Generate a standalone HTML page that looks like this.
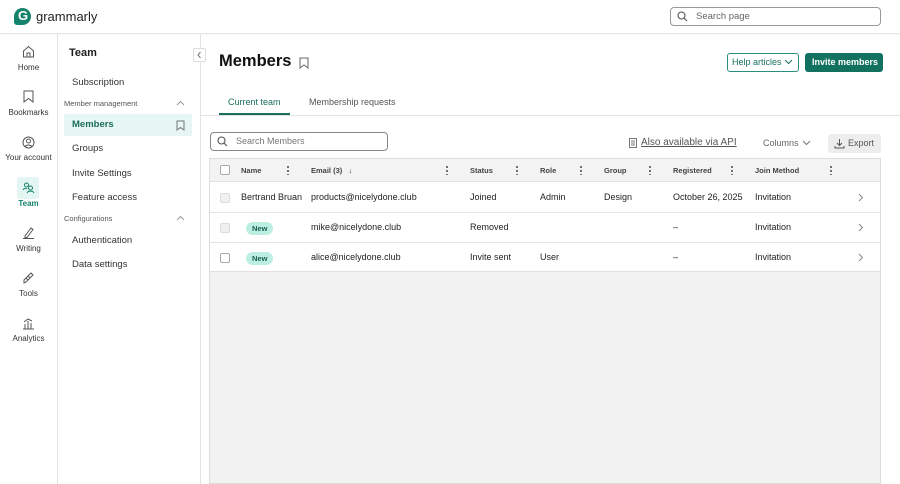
<!DOCTYPE html>
<html><head><meta charset="utf-8"><style>
*{box-sizing:border-box;margin:0;padding:0}
body{width:900px;height:484px;overflow:hidden;background:#fff;font-family:"Liberation Sans",sans-serif;color:#1f1f1f;position:relative}
.a{position:absolute}
.t{position:absolute;white-space:nowrap}
.rail .t{font-size:8px;color:#333;text-align:center;width:57px;left:0}
.nav{font-size:9.5px;color:#333}
.hd{font-size:7.5px;font-weight:bold;color:#444}
.cell{font-size:9px;color:#222}
.dots{position:absolute;width:2px;height:10px;background:radial-gradient(circle,#666 1px,transparent 1.2px) 0 0/2px 4px repeat-y}
.cb{position:absolute;width:10px;height:10px;border:1px solid #aaa;border-radius:2px;background:#fff}
.new{position:absolute;font-size:7.5px;font-weight:bold;color:#1a5e50;background:#bdeee2;border-radius:7px;padding:2px 6px}
</style></head><body>
<div class="a" style="left:0;top:0;width:900px;height:34px;border-bottom:1px solid #e6e6e6;box-shadow:0 1px 2px rgba(0,0,0,.04)"></div>
<div class="a" style="left:14px;top:8px;width:17px;height:17px;border-radius:50% 50% 50% 3px;background:#15826c"></div>
<div class="t" style="left:18px;top:8px;color:#fff;font-weight:bold;font-size:13px">G</div>
<div class="t" style="left:36px;top:9px;font-size:13px;color:#222">grammarly</div>
<div class="a" style="left:670px;top:7px;width:211px;height:19px;border:1px solid #999;border-radius:4px"></div>
<svg class="a" style="left:677px;top:11px" width="11" height="11" viewBox="0 0 11 11"><circle cx="4.5" cy="4.5" r="3.5" fill="none" stroke="#555" stroke-width="1.1"/><path d="M7 7l3 3" stroke="#555" stroke-width="1.1"/></svg>
<div class="t" style="left:696px;top:11px;font-size:9.5px;color:#666">Search page</div>
<div class="a" style="left:57px;top:34px;width:1px;height:450px;background:#e3e3e3"></div>
<div class="rail">
<svg class="a" style="left:22px;top:45px" width="13" height="13" viewBox="0 0 13 13"><path d="M1.5 6L6.5 1.5 11.5 6V12H1.5Z M5 12V8h3v4" fill="none" stroke="#555"/></svg>
<div class="t" style="top:63px">Home</div>
<svg class="a" style="left:23px;top:90px" width="11" height="13" viewBox="0 0 11 13"><path d="M1 1h9v11L5.5 8.5 1 12Z" fill="none" stroke="#555"/></svg>
<div class="t" style="top:108px">Bookmarks</div>
<svg class="a" style="left:22px;top:136px" width="13" height="13" viewBox="0 0 13 13"><circle cx="6.5" cy="6.5" r="5.5" fill="none" stroke="#555"/><circle cx="6.5" cy="5" r="2" fill="none" stroke="#555"/><path d="M3 10.5c2-2 5-2 7 0" fill="none" stroke="#555"/></svg>
<div class="t" style="top:153px">Your account</div>
<div class="a" style="left:17px;top:177px;width:22px;height:22px;background:#e4f6f2;border-radius:3px"></div>
<svg class="a" style="left:22px;top:181px" width="13" height="13" viewBox="0 0 13 13"><circle cx="4.5" cy="4" r="2" fill="none" stroke="#15826c"/><circle cx="8.5" cy="7" r="2" fill="none" stroke="#15826c"/><path d="M1 9c1-2 3-2 4-1M5 12c1-2.5 6-2.5 7 0" fill="none" stroke="#15826c"/></svg>
<div class="t" style="top:199px;color:#15826c;font-weight:bold">Team</div>
<svg class="a" style="left:22px;top:226px" width="13" height="13" viewBox="0 0 13 13"><path d="M3 10L9 2l2 1.5L5 11.5 3 11.5Z M1 12.5h11" fill="none" stroke="#555"/></svg>
<div class="t" style="top:244px">Writing</div>
<svg class="a" style="left:22px;top:271px" width="13" height="13" viewBox="0 0 13 13"><path d="M2 9l7-7 2 2-7 7-2 1Z M4 7l2 2M6 5l2 2" fill="none" stroke="#555"/></svg>
<div class="t" style="top:289px">Tools</div>
<svg class="a" style="left:22px;top:317px" width="13" height="13" viewBox="0 0 13 13"><path d="M1 12h11M3 12V7M6 12V4M9 12V6M2 5l4-3 4 2" fill="none" stroke="#555"/></svg>
<div class="t" style="top:334px">Analytics</div>
</div>
<div class="a" style="left:200px;top:34px;width:1px;height:450px;background:#e3e3e3"></div>
<div class="a" style="left:193px;top:48px;width:13px;height:14px;border:1px solid #ddd;border-radius:2px;background:#fff"></div>
<svg class="a" style="left:196px;top:51px" width="7" height="8" viewBox="0 0 7 8"><path d="M4.5 1L2 4l2.5 3" fill="none" stroke="#777"/></svg>
<div class="t" style="left:69px;top:47px;font-size:11px;font-weight:bold">Team</div>
<div class="t nav" style="left:72px;top:77px">Subscription</div>
<div class="t" style="left:64px;top:99px;font-size:7.5px;color:#555">Member management</div>
<svg class="a" style="left:176px;top:100px" width="9" height="6" viewBox="0 0 9 6"><path d="M1 5l3.5-3.5L8 5" fill="none" stroke="#999"/></svg>
<div class="a" style="left:64px;top:114px;width:128px;height:22px;background:#e6f6f3"></div>
<div class="t" style="left:72px;top:119px;font-size:9.5px;font-weight:bold;color:#1a6e5c">Members</div>
<svg class="a" style="left:176px;top:120px" width="9" height="11" viewBox="0 0 9 11"><path d="M1 1h7v9L4.5 7.5 1 10Z" fill="none" stroke="#777"/></svg>
<div class="t nav" style="left:72px;top:143px">Groups</div>
<div class="t nav" style="left:72px;top:168px">Invite Settings</div>
<div class="t nav" style="left:72px;top:192px">Feature access</div>
<div class="t" style="left:64px;top:214px;font-size:7.5px;color:#555">Configurations</div>
<svg class="a" style="left:176px;top:215px" width="9" height="6" viewBox="0 0 9 6"><path d="M1 5l3.5-3.5L8 5" fill="none" stroke="#999"/></svg>
<div class="t nav" style="left:72px;top:235px">Authentication</div>
<div class="t nav" style="left:72px;top:259px">Data settings</div>
<div class="t" style="left:219px;top:52px;font-size:16.5px;font-weight:bold;color:#111">Members</div>
<svg class="a" style="left:299px;top:57px" width="10" height="12" viewBox="0 0 10 12"><path d="M1 1h8v10L5 8 1 11Z" fill="none" stroke="#666"/></svg>
<div class="a" style="left:727px;top:53px;width:72px;height:19px;border:1px solid #2a8f7a;border-radius:3px"></div>
<div class="t" style="left:732px;top:57px;font-size:9px;color:#1a6e5c">Help articles</div>
<svg class="a" style="left:784px;top:59px" width="9" height="6" viewBox="0 0 9 6"><path d="M1 1l3.5 3.5L8 1" fill="none" stroke="#1a6e5c"/></svg>
<div class="a" style="left:805px;top:53px;width:78px;height:19px;background:#13725f;border-radius:3px"></div>
<div class="t" style="left:812px;top:57px;font-size:9px;font-weight:bold;color:#fff">Invite members</div>
<div class="t" style="left:228px;top:97px;font-size:9px;color:#1a6e5c">Current team</div>
<div class="a" style="left:219px;top:113px;width:71px;height:2px;background:#1a6e5c"></div>
<div class="t" style="left:309px;top:97px;font-size:9px;color:#555">Membership requests</div>
<div class="a" style="left:200px;top:115px;width:700px;height:1px;background:#e3e3e3"></div>
<div class="a" style="left:210px;top:132px;width:178px;height:19px;border:1px solid #888;border-radius:4px"></div>
<svg class="a" style="left:217px;top:136px" width="11" height="11" viewBox="0 0 11 11"><circle cx="4.5" cy="4.5" r="3.5" fill="none" stroke="#555" stroke-width="1.1"/><path d="M7 7l3 3" stroke="#555" stroke-width="1.1"/></svg>
<div class="t" style="left:236px;top:136px;font-size:9px;color:#777">Search Members</div>
<svg class="a" style="left:629px;top:138px" width="8" height="10" viewBox="0 0 8 10"><rect x="0.5" y="0.5" width="7" height="9" fill="none" stroke="#777"/><path d="M2 3h4M2 5h4M2 7h4" stroke="#777"/></svg>
<div class="t" style="left:641px;top:137px;font-size:10px;color:#555;text-decoration:underline">Also available via API</div>
<div class="t" style="left:763px;top:138px;font-size:9px;color:#666">Columns</div>
<svg class="a" style="left:802px;top:140px" width="9" height="6" viewBox="0 0 9 6"><path d="M1 1l3.5 3.5L8 1" fill="none" stroke="#777"/></svg>
<div class="a" style="left:828px;top:134px;width:53px;height:19px;background:#ededed;border-radius:3px"></div>
<svg class="a" style="left:834px;top:138px" width="11" height="11" viewBox="0 0 11 11"><path d="M5.5 1v6M3 5l2.5 2.5L8 5M1 8v2h9V8" fill="none" stroke="#555"/></svg>
<div class="t" style="left:848px;top:138px;font-size:9px;color:#555">Export</div>
<div class="a" style="left:209px;top:158px;width:672px;height:326px;border:1px solid #ddd;background:#f2f2f2"></div>
<div class="a" style="left:210px;top:159px;width:670px;height:23px;background:#f3f3f3;border-bottom:1px solid #e2e2e2"></div>
<div class="a" style="left:210px;top:182px;width:670px;height:90px;background:#fff"></div>
<div class="a" style="left:210px;top:212px;width:670px;height:1px;background:#e5e5e5"></div>
<div class="a" style="left:210px;top:242px;width:670px;height:1px;background:#e5e5e5"></div>
<div class="a" style="left:210px;top:271px;width:670px;height:1px;background:#e0e0e0"></div>
<div class="cb" style="left:220px;top:165px"></div>
<div class="t hd" style="left:241px;top:166px">Name</div><div class="dots" style="left:287px;top:165px"></div>
<div class="t hd" style="left:311px;top:166px">Email (3) &nbsp;&nbsp;↓</div><div class="dots" style="left:446px;top:165px"></div>
<div class="t hd" style="left:470px;top:166px">Status</div><div class="dots" style="left:516px;top:165px"></div>
<div class="t hd" style="left:540px;top:166px">Role</div><div class="dots" style="left:580px;top:165px"></div>
<div class="t hd" style="left:604px;top:166px">Group</div><div class="dots" style="left:649px;top:165px"></div>
<div class="t hd" style="left:673px;top:166px">Registered</div><div class="dots" style="left:731px;top:165px"></div>
<div class="t hd" style="left:755px;top:166px">Join Method</div><div class="dots" style="left:830px;top:165px"></div>
<div class="cb" style="left:220px;top:193px;border-color:#ddd;background:#f0f0f0"></div>
<div class="t cell" style="left:241px;top:192px">Bertrand Bruan</div>
<div class="t cell" style="left:311px;top:192px">products@nicelydone.club</div>
<div class="t cell" style="left:470px;top:192px">Joined</div>
<div class="t cell" style="left:540px;top:192px">Admin</div>
<div class="t cell" style="left:604px;top:192px">Design</div>
<div class="t cell" style="left:673px;top:192px">October 26, 2025</div>
<div class="t cell" style="left:755px;top:192px">Invitation</div>
<div class="cb" style="left:220px;top:223px;border-color:#ddd;background:#f0f0f0"></div>
<div class="new" style="left:246px;top:222px">New</div>
<div class="t cell" style="left:311px;top:222px">mike@nicelydone.club</div>
<div class="t cell" style="left:470px;top:222px">Removed</div>
<div class="t cell" style="left:673px;top:222px">–</div>
<div class="t cell" style="left:755px;top:222px">Invitation</div>
<div class="cb" style="left:220px;top:253px"></div>
<div class="new" style="left:246px;top:252px">New</div>
<div class="t cell" style="left:311px;top:252px">alice@nicelydone.club</div>
<div class="t cell" style="left:470px;top:252px">Invite sent</div>
<div class="t cell" style="left:540px;top:252px">User</div>
<div class="t cell" style="left:673px;top:252px">–</div>
<div class="t cell" style="left:755px;top:252px">Invitation</div>
<svg class="a" style="left:858px;top:193px" width="6" height="9" viewBox="0 0 6 9"><path d="M1 1l3.5 3.5L1 8" fill="none" stroke="#888"/></svg>
<svg class="a" style="left:858px;top:223px" width="6" height="9" viewBox="0 0 6 9"><path d="M1 1l3.5 3.5L1 8" fill="none" stroke="#888"/></svg>
<svg class="a" style="left:858px;top:253px" width="6" height="9" viewBox="0 0 6 9"><path d="M1 1l3.5 3.5L1 8" fill="none" stroke="#888"/></svg>
</body></html>
